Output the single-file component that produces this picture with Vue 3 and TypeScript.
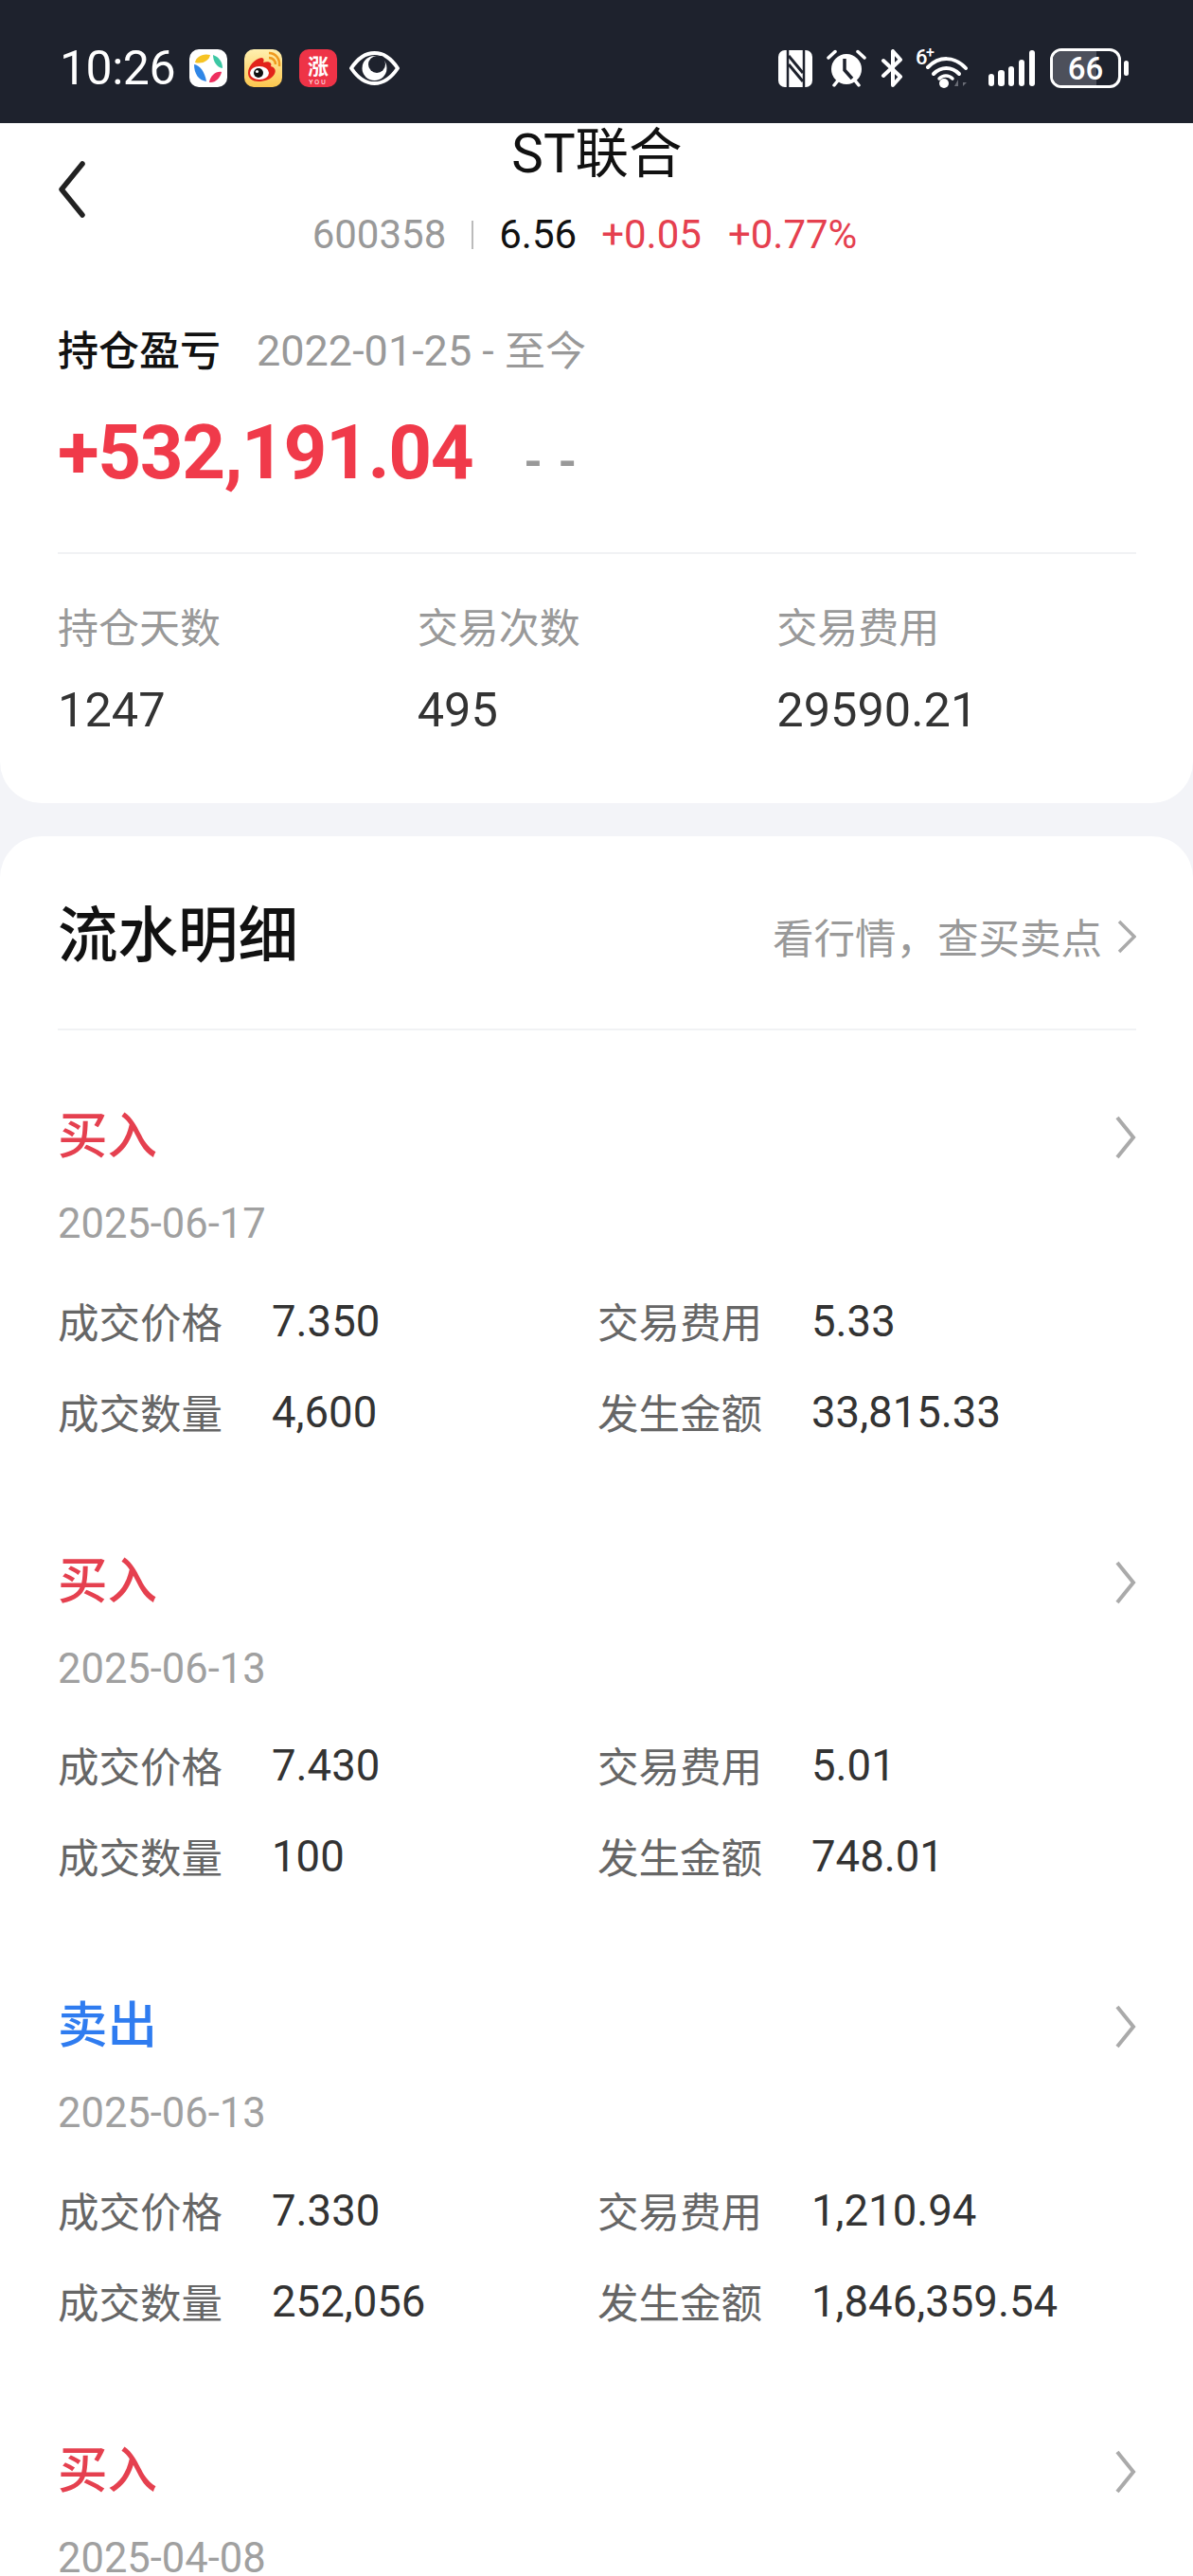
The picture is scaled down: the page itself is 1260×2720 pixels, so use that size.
<template>
  <div class="page">
    <!-- status bar -->
    <div class="status-bar">
      <div class="status-left">
        <span class="clock">10:26</span>
        <svg class="app-icon first" viewBox="0 0 40 40">
          <rect width="40" height="40" rx="10" fill="#fff" />
          <path d="M6 14C7 8 14 4 22 6C21 12 14 16 6 14Z" fill="#f6c324" />
          <path d="M25 6C31 8 35 13 35 20C29 19 25 13 25 6Z" fill="#3cc7a4" />
          <path d="M5 16C11 17 16 23 18 34C10 33 5 26 5 16Z" fill="#2f86e6" />
          <path d="M21 35C22 28 28 23 34 24C33 30 27 36 21 35Z" fill="#ee2f5f" />
        </svg>
        <svg class="app-icon" viewBox="0 0 40 40">
          <defs>
            <linearGradient id="wb" x1="0" y1="0" x2="0" y2="1">
              <stop offset="0" stop-color="#fff0b0" />
              <stop offset="1" stop-color="#fbc64e" />
            </linearGradient>
          </defs>
          <rect width="40" height="40" rx="10" fill="url(#wb)" />
          <path d="M4 25C4 18 11 10 18 9C21 9 21 12 20 14C25 12 30 14 28 18C32 19 34 22 32 26C29 32 21 34 15 34C9 34 4 31 4 25Z" fill="#e2231a" />
          <ellipse cx="16" cy="25" rx="10" ry="7" fill="#fff" />
          <circle cx="15" cy="25" r="5" fill="#111" />
          <circle cx="13.5" cy="23.5" r="1.6" fill="#fff" />
          <path d="M26 9C30 9 33 12 33 16" fill="none" stroke="#f09a1e" stroke-width="2.5" />
          <path d="M26 4C33 4 38 10 37 18" fill="none" stroke="#f09a1e" stroke-width="2.5" />
        </svg>
        <svg class="app-icon" viewBox="0 0 40 40">
          <rect width="40" height="40" rx="10" fill="#ee3347" />
          <text x="20" y="26" class="zhang">涨</text>
          <text x="20" y="36.5" class="zhang-sub">YOU</text>
        </svg>
        <svg class="eye" viewBox="0 0 53 36">
          <path d="M2 18C10 6 18 2 26.500 2C35 2 43 6 51 18C43 30 35 34 26.500 34C18 34 10 30 2 18Z" fill="#1e222d" stroke="#fff" stroke-width="4" stroke-linejoin="round" />
          <circle cx="26.500" cy="18" r="13" fill="#fff" />
          <circle cx="29" cy="14" r="9" fill="#1e222d" />
          <circle cx="33" cy="9" r="4" fill="#1e222d" />
        </svg>
      </div>
      <div class="status-right">
        <svg class="nfc" viewBox="0 0 36 39">
          <rect width="36" height="39" rx="7" fill="#fff" />
          <path d="M10 -1V40M27 -1V40" stroke="#1e222d" stroke-width="2.500" />
          <path d="M11 6L26 24M11 15L26 33" stroke="#1e222d" stroke-width="3" fill="none" />
        </svg>
        <svg class="alarm" viewBox="0 0 42 40">
          <circle cx="21" cy="21" r="16" fill="#fff" />
          <path d="M2 9L9 2.500M40 9L33 2.500M8 38L12 33M34 38L30 33" stroke="#fff" stroke-width="3.500" stroke-linecap="round" />
          <path d="M19 10V22L27 31" fill="none" stroke="#1e222d" stroke-width="3.500" />
        </svg>
        <svg class="bt" viewBox="0 0 25 40">
          <path d="M3 28L21 11L13 2V38L21 29L3 12" fill="none" stroke="#fff" stroke-width="4" stroke-linejoin="round" stroke-linecap="round" />
        </svg>
        <svg class="wifi" viewBox="0 -5 56 47">
          <text x="0" y="17" class="wifi-label">6</text>
          <text x="11" y="10" class="wifi-label small">+</text>
          <path d="M13 20C25 8 41 8 53 21" fill="none" stroke="#fff" stroke-width="4" stroke-linecap="round" />
          <path d="M19 27C27 19 38 19 46 27" fill="none" stroke="#fff" stroke-width="4" stroke-linecap="round" />
          <path d="M25 32C29 28 35 28 39 32" fill="none" stroke="#fff" stroke-width="3.500" stroke-linecap="round" />
          <circle cx="30" cy="37" r="5" fill="#fff" />
          <path d="M41 40L45 33V40ZM50 33V40L54 36H50Z" fill="#6a6d76" />
        </svg>
        <div class="signal">
          <i v-for="h in signalBars" :key="h" :style="{ height: h + 'px' }"></i>
        </div>
        <div class="battery">
          <div class="battery-body">
            <div class="battery-fill"></div>
            <span>66</span>
          </div>
          <i class="battery-tip"></i>
        </div>
      </div>
    </div>

    <!-- summary card -->
    <div class="card summary">
      <div class="nav">
        <svg class="back" viewBox="0 0 28 60">
          <path d="M25 3L3 30L25 57" fill="none" stroke="#222" stroke-width="5.500" stroke-linecap="round" stroke-linejoin="round" />
        </svg>
        <div class="nav-center">
          <div class="title">ST联合</div>
          <div class="quote">
            <span class="code">600358</span>
            <i class="sep"></i>
            <span class="price">6.56</span>
            <span class="up first-up">+0.05</span>
            <span class="up">+0.77%</span>
          </div>
        </div>
      </div>

      <div class="profit-head">
        <span class="profit-label">持仓盈亏</span>
        <span class="profit-range">2022-01-25 - <span class="range-cjk">至今</span></span>
      </div>
      <div class="profit-row">
        <span class="profit-value">+532,191.04</span>
        <span class="profit-rate">- -</span>
      </div>

      <div class="stats">
        <div v-for="s in stats" :key="s.label" class="stat">
          <div class="stat-label">{{ s.label }}</div>
          <div class="stat-value">{{ s.value }}</div>
        </div>
      </div>
    </div>

    <!-- transactions -->
    <div class="card records">
      <div class="records-head">
        <span class="records-title">流水明细</span>
        <span class="records-link">
          看行情，查买卖点
          <svg class="chev small" viewBox="0 0 20 36">
            <path d="M2 2L18 18L2 34" fill="none" stroke="#aaa" stroke-width="3.500" />
          </svg>
        </span>
      </div>

      <div v-for="(r, i) in records" :key="i" class="record">
        <div class="record-head">
          <span class="record-type" :class="r.type === '买入' ? 'buy' : 'sell'">{{ r.type }}</span>
          <svg class="chev" viewBox="0 0 23 46">
            <path d="M3 2L20 23L3 44" fill="none" stroke="#aaa" stroke-width="4" />
          </svg>
        </div>
        <div class="record-date">{{ r.date }}</div>
        <div v-if="r.price" class="record-grid">
          <div class="cell"><span class="cell-label">成交价格</span><span class="cell-value">{{ r.price }}</span></div>
          <div class="cell"><span class="cell-label">交易费用</span><span class="cell-value">{{ r.fee }}</span></div>
          <div class="cell"><span class="cell-label">成交数量</span><span class="cell-value">{{ r.qty }}</span></div>
          <div class="cell"><span class="cell-label">发生金额</span><span class="cell-value">{{ r.amount }}</span></div>
        </div>
      </div>
    </div>
  </div>
</template>

<script setup lang="ts">
interface TradeRecord {
  type: '买入' | '卖出'
  date: string
  price?: string
  fee?: string
  qty?: string
  amount?: string
}

const signalBars = [13, 17, 21, 28, 38]

const stats = [
  { label: '持仓天数', value: '1247' },
  { label: '交易次数', value: '495' },
  { label: '交易费用', value: '29590.21' }
]

const records: TradeRecord[] = [
  { type: '买入', date: '2025-06-17', price: '7.350', fee: '5.33', qty: '4,600', amount: '33,815.33' },
  { type: '买入', date: '2025-06-13', price: '7.430', fee: '5.01', qty: '100', amount: '748.01' },
  { type: '卖出', date: '2025-06-13', price: '7.330', fee: '1,210.94', qty: '252,056', amount: '1,846,359.54' },
  { type: '买入', date: '2025-04-08' }
]
</script>

<style>
html,
body {
  margin: 0;
  background: #f3f4f8;
}
</style>

<style scoped>
.page {
  height: 2720px;
  overflow: hidden;
  background: #f3f4f8;
  font-family: Roboto, "Noto Sans CJK SC", sans-serif;
}

/* status bar */
.status-bar {
  height: 130px;
  background: #1e222d;
  display: flex;
  align-items: center;
  justify-content: space-between;
  padding: 14px 68px 0 63px;
  box-sizing: border-box;
  color: #fff;
}
.status-left,
.status-right {
  display: flex;
  align-items: center;
}
.clock {
  font-size: 50px;
  width: 137px;
  letter-spacing: -0.5px;
}
.app-icon {
  width: 40px;
  height: 40px;
  margin-right: 18px;
}
.eye {
  width: 53px;
  height: 36px;
  margin-left: -5px;
}
.zhang {
  font-size: 22px;
  font-weight: 700;
  fill: #fff;
  text-anchor: middle;
  font-family: "Noto Sans CJK SC", sans-serif;
}
.zhang-sub {
  font-size: 7px;
  fill: #fff;
  text-anchor: middle;
  letter-spacing: 2px;
}
.nfc {
  width: 36px;
  height: 39px;
  margin-right: 15px;
}
.alarm {
  width: 42px;
  height: 40px;
  margin-right: 15px;
}
.bt {
  width: 25px;
  height: 40px;
  margin-right: 12px;
}
.wifi {
  width: 56px;
  height: 47px;
  margin-top: -5px;
  margin-right: 21px;
}
.wifi-label {
  font-size: 22px;
  font-weight: 500;
  fill: #fff;
}
.wifi-label.small {
  font-size: 16px;
}
.signal {
  display: flex;
  align-items: flex-end;
  gap: 4.500px;
  height: 38px;
  margin-right: 16px;
}
.signal i {
  width: 6.300px;
  background: #fff;
  border-radius: 3px;
}
.battery {
  display: flex;
  align-items: center;
  gap: 3px;
}
.battery-body {
  position: relative;
  width: 75px;
  height: 42px;
  box-sizing: border-box;
  border: 3px solid #fff;
  border-radius: 12px;
  display: flex;
  align-items: center;
  justify-content: center;
  overflow: hidden;
}
.battery-fill {
  position: absolute;
  left: 0;
  top: 0;
  bottom: 0;
  width: 66%;
  background: #4d505b;
}
.battery-body span {
  position: relative;
  font-size: 33px;
  font-weight: 500;
}
.battery-tip {
  width: 5px;
  height: 16px;
  background: #fff;
  border-radius: 3px;
}

/* cards */
.card {
  background: #fff;
}
.summary {
  padding: 0 60px 0 61px;
  height: 718px;
  box-sizing: border-box;
  border-radius: 0 0 44px 44px;
}
.nav {
  position: relative;
  display: flex;
  justify-content: center;
  height: 148px;
}
.back {
  position: absolute;
  left: 1px;
  top: 40px;
  width: 28px;
  height: 60px;
}
.nav-center {
  display: flex;
  flex-direction: column;
  align-items: center;
}
.title {
  font-size: 56.500px;
  line-height: 60px;
  color: #111;
  margin-top: 3px;
}
.quote {
  display: flex;
  align-items: center;
  gap: 28px;
  margin-top: 30px;
  padding-right: 26px;
  font-size: 42px;
  line-height: 50px;
  font-weight: 450;
}
.code {
  color: #999;
  font-weight: 400;
}
.sep {
  width: 2px;
  height: 30px;
  background: #bbb;
  margin: 0 -1px;
}
.price {
  color: #111;
}
.up {
  color: #e5404f;
}
.first-up {
  margin-left: -2px;
}

.profit-head {
  display: flex;
  align-items: center;
  gap: 38px;
  margin-top: 65px;
  line-height: 56px;
}
.profit-label {
  font-size: 43px;
  font-weight: 500;
  color: #111;
}
.profit-range {
  font-size: 45px;
  color: #999;
}
.range-cjk {
  font-size: 43px;
}
.profit-row {
  display: flex;
  align-items: center;
  gap: 54px;
  margin-top: 31px;
  height: 96px;
}
.profit-value {
  font-size: 80px;
  font-weight: 700;
  letter-spacing: -1.400px;
  color: #f03a4a;
}
.profit-rate {
  font-size: 50px;
  font-weight: 700;
  color: #999;
  letter-spacing: 2px;
  margin-top: 20px;
}
.stats {
  display: grid;
  grid-template-columns: repeat(3, 1fr);
  margin-top: 57px;
  padding-top: 51px;
  border-top: 2px solid #f1f2f4;
}
.stat-label {
  font-size: 43px;
  line-height: 56px;
  color: #999;
}
.stat-value {
  font-size: 50.500px;
  font-weight: 450;
  line-height: 60px;
  margin-top: 28px;
  color: #333;
}

.records {
  margin-top: 35px;
  padding: 0 60px 0 61px;
  border-radius: 44px 44px 0 0;
}
.records-head {
  display: flex;
  align-items: center;
  justify-content: space-between;
  height: 205px;
  box-sizing: border-box;
  border-bottom: 2px solid #f1f2f4;
}
.records-title {
  font-size: 63.500px;
  font-weight: 500;
  color: #111;
  margin-top: -6px;
}
.records-link {
  display: flex;
  align-items: center;
  gap: 16px;
  font-size: 43.500px;
  color: #999;
  margin-top: 8px;
}
.chev {
  width: 23px;
  height: 46px;
  margin-top: 6px;
}
.chev.small {
  width: 20px;
  height: 36px;
  margin-top: 0;
}
.record {
  height: 469.500px;
  padding-top: 80px;
  box-sizing: border-box;
}
.record-head {
  display: flex;
  align-items: center;
  justify-content: space-between;
  height: 60px;
}
.record-type {
  font-size: 52.500px;
  font-weight: 500;
  margin-top: -6px;
}
.buy {
  color: #e5404f;
}
.sell {
  color: #2f7cf0;
}
.record-date {
  font-size: 43.500px;
  line-height: 50px;
  margin-top: 40px;
  color: #a0a0a0;
}
.record-grid {
  display: grid;
  grid-template-columns: 570px 1fr;
  row-gap: 40px;
  margin-top: 49px;
}
.cell {
  display: flex;
  align-items: center;
  height: 56px;
}
.cell-label {
  width: 226px;
  font-size: 43.500px;
  color: #666;
  margin-top: -2px;
}
.cell-value {
  font-size: 45.500px;
  font-weight: 450;
  color: #333;
}
</style>
